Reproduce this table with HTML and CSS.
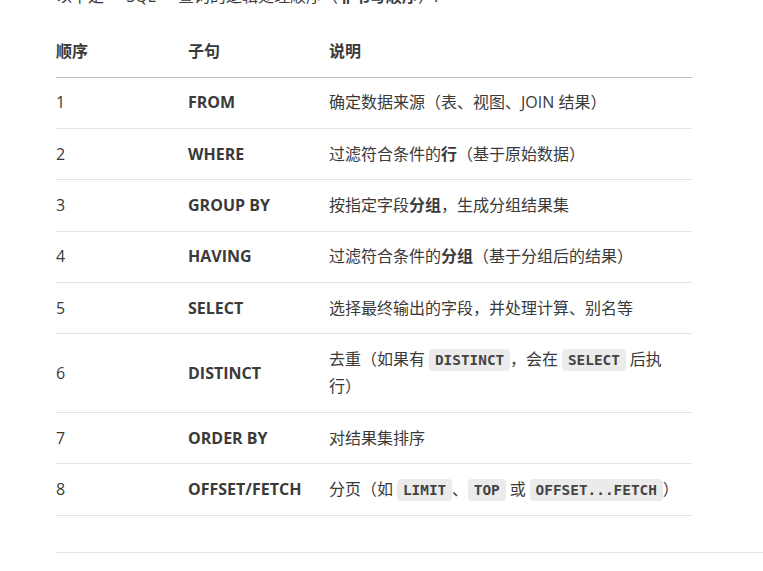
FILE: index.html
```html
<!DOCTYPE html>
<html>
<head>
<meta charset="utf-8">
<link rel="stylesheet" href="styles.css">
</head>
<body>
<main class="doc">
  <p class="intro">以下是 SQL 查询的逻辑处理顺序（<strong>非书写顺序</strong>）:</p>
  <table class="order">
    <thead>
      <tr><th class="c1">顺序</th><th class="c2">子句</th><th class="c3">说明</th></tr>
    </thead>
    <tbody>
      <tr><td>1</td><td><strong>FROM</strong></td><td>确定数据来源（表、视图、JOIN 结果）</td></tr>
      <tr><td>2</td><td><strong>WHERE</strong></td><td>过滤符合条件的<strong>行</strong>（基于原始数据）</td></tr>
      <tr><td>3</td><td><strong>GROUP BY</strong></td><td>按指定字段<strong>分组</strong>，生成分组结果集</td></tr>
      <tr><td>4</td><td><strong>HAVING</strong></td><td>过滤符合条件的<strong>分组</strong>（基于分组后的结果）</td></tr>
      <tr><td>5</td><td><strong>SELECT</strong></td><td>选择最终输出的字段，并处理计算、别名等</td></tr>
      <tr><td>6</td><td><strong>DISTINCT</strong></td><td>去重（如果有 <code>DISTINCT</code>，会在 <code>SELECT</code> 后执<br>行）</td></tr>
      <tr><td>7</td><td><strong>ORDER BY</strong></td><td>对结果集排序</td></tr>
      <tr><td>8</td><td><strong>OFFSET/FETCH</strong></td><td>分页（如 <code>LIMIT</code>、<code>TOP</code> 或 <code>OFFSET...FETCH</code>）</td></tr>
    </tbody>
  </table>
  <hr class="rule">
</main>
</body>
</html>
```

FILE: styles.css
```css
html, body {
  margin: 0;
  padding: 0;
  background: #fff;
  overflow: hidden;
}
body {
  font-family: "Open Sans", "Noto Sans CJK SC", sans-serif;
  font-size: 16px;
  color: #3a3a3a;
  line-height: 1.7;
}
.doc {
  padding-left: 56px;
  margin-top: -17px;
}
.intro {
  margin: 0 0 16px;
  word-spacing: 18px;
}
.intro strong {
  font-weight: 700;
}
.order {
  width: 636px;
  border-collapse: collapse;
  table-layout: fixed;
}
.order th, .order td {
  text-align: left;
  vertical-align: middle;
  padding: 11.6px 0;
}
.order th {
  font-weight: 700;
  border-bottom: 1px solid #bdbdbd;
}
.order td {
  border-bottom: 1px solid #e3e3e3;
}
.c1 { width: 132px; }
.c2 { width: 141px; }
.order strong {
  font-weight: 700;
}
code {
  font-family: "DejaVu Sans Mono", monospace;
  font-size: 0.9em;
  font-weight: 700;
  background: #ebebeb;
  border-radius: 4px;
  padding: 0.2em 0.4em;
  color: #444;
}
.rule {
  border: 0;
  border-top: 1px solid #e3e3e3;
  margin: 36px 0 0;
  height: 0;
}
```
